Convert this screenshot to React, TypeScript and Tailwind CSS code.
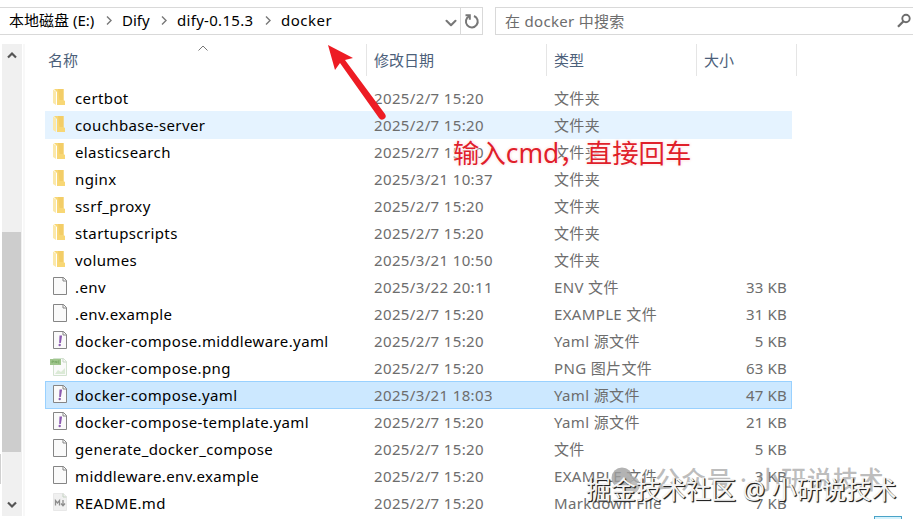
import { ChevronDown } from 'lucide-react';

type Kind = 'folder' | 'file' | 'yaml' | 'png' | 'md';

interface Entry {
  name: string;
  date: string;
  type: string;
  size?: string;
  kind: Kind;
  state?: 'hover' | 'selected';
}

const entries: Entry[] = [
  { name: 'certbot', date: '2025/2/7 15:20', type: '文件夹', kind: 'folder' },
  { name: 'couchbase-server', date: '2025/2/7 15:20', type: '文件夹', kind: 'folder', state: 'hover' },
  { name: 'elasticsearch', date: '2025/2/7 15:20', type: '文件夹', kind: 'folder' },
  { name: 'nginx', date: '2025/3/21 10:37', type: '文件夹', kind: 'folder' },
  { name: 'ssrf_proxy', date: '2025/2/7 15:20', type: '文件夹', kind: 'folder' },
  { name: 'startupscripts', date: '2025/2/7 15:20', type: '文件夹', kind: 'folder' },
  { name: 'volumes', date: '2025/3/21 10:50', type: '文件夹', kind: 'folder' },
  { name: '.env', date: '2025/3/22 20:11', type: 'ENV 文件', size: '33 KB', kind: 'file' },
  { name: '.env.example', date: '2025/2/7 15:20', type: 'EXAMPLE 文件', size: '31 KB', kind: 'file' },
  { name: 'docker-compose.middleware.yaml', date: '2025/2/7 15:20', type: 'Yaml 源文件', size: '5 KB', kind: 'yaml' },
  { name: 'docker-compose.png', date: '2025/2/7 15:20', type: 'PNG 图片文件', size: '63 KB', kind: 'png' },
  { name: 'docker-compose.yaml', date: '2025/3/21 18:03', type: 'Yaml 源文件', size: '47 KB', kind: 'yaml', state: 'selected' },
  { name: 'docker-compose-template.yaml', date: '2025/2/7 15:20', type: 'Yaml 源文件', size: '21 KB', kind: 'yaml' },
  { name: 'generate_docker_compose', date: '2025/2/7 15:20', type: '文件', size: '5 KB', kind: 'file' },
  { name: 'middleware.env.example', date: '2025/2/7 15:20', type: 'EXAMPLE 文件', size: '3 KB', kind: 'file' },
  { name: 'README.md', date: '2025/2/7 15:20', type: 'Markdown File', size: '7 KB', kind: 'md' },
];

const FileIcon = ({ kind }: { kind: Kind }) => {
  if (kind === 'folder') {
    return (
      <svg width="20" height="20" viewBox="0 0 20 20" className="shrink-0">
        <path d="M4 1h9.500v11l1.500 1v4H7V4z" fill="#f8d775" />
        <path d="M8 1h5.500v11h-4z" fill="#f3cd67" />
        <path d="M3 1.500l3 2v13.500l-3-2z" fill="#fbe8a9" />
      </svg>
    );
  }
  const pale = kind === 'png' || kind === 'md';
  return (
    <svg width="20" height="20" viewBox="0 0 20 20" className="shrink-0">
      <path
        d="M3.500 0.500h10l3 3v14h-13z"
        fill={kind === 'md' ? '#f0f0f0' : '#fafafa'}
        stroke={kind === 'png' ? '#d3e3d0' : kind === 'md' ? '#e8e8e8' : '#858585'}
      />
      <path d="M13 0.500v3.500h3.500" fill="none" stroke={pale ? '#c5d3c2' : '#858585'} />
      {kind === 'yaml' && (
        <g fill="#8b5ab0">
          <path d="M9.500 4.500h2.600l-1.200 7.500H9.200z" />
          <circle cx="9.700" cy="14" r="1.200" />
        </g>
      )}
      {kind === 'png' && (
        <g>
          <path d="M0 1h11v6H0z" fill="#9fc58c" />
          <path d="M2 5V3h1.500v1H2M5 5V3l1.500 2V3M9.500 3H8v2h1.500" fill="none" stroke="#76a662" strokeWidth="0.7" />
          <path d="M5 16l3-4 3 2 4-4v6z" fill="#dbead6" />
        </g>
      )}
      {kind === 'md' && (
        <path d="M5.500 12.500v-5l2 2.500 2-2.500v5M13 7v5.500m-2-2l2 2.200 2-2.200" fill="none" stroke="#8c8c8c" strokeWidth="1.300" />
      )}
    </svg>
  );
};

const Crumb = () => (
  <svg width="6" height="9" viewBox="0 0 6 9" className="shrink-0">
    <path d="M1 0.500l4 4-4 4" fill="none" stroke="#777" strokeWidth="1.400" />
  </svg>
);

const AddressBar = () => (
  <div className="flex h-7 mt-[7px] text-black">
    <div className="flex w-[483px] border border-l-0 border-[#d9d9d9]">
      <div className="flex flex-1 items-center pb-0.5 pl-[9px] whitespace-nowrap">
        <span className="w-[97px]">本地磁盘 (E:)</span>
        <Crumb />
        <span className="ml-[10px] w-[39px]">Dify</span>
        <Crumb />
        <span className="ml-[10px] w-[88px] tracking-[0.3px]">dify-0.15.3</span>
        <Crumb />
        <span className="ml-[10px] tracking-[0.5px]">docker</span>
      </div>
      <ChevronDown size={18} strokeWidth={2.8} className="mt-[6px] text-[#777]" />
      <div className="flex w-[22px] items-center justify-center border-l border-[#d9d9d9]">
        <svg width="16" height="16" viewBox="0 0 16 16" fill="none" stroke="#777" strokeWidth="2">
          <path d="M10 3a5.900 5.900 0 1 1-4.800 0.200" />
          <path d="M1.500 2.200h4.300v4.500" />
        </svg>
      </div>
    </div>
    <div className="ml-3 flex flex-1 items-center border border-r-0 border-[#d9d9d9] pl-[9px] text-[#6d6d6d]">
      <span className="flex-1 tracking-[0.3px]">在 docker 中搜索</span>
      <svg width="16" height="16" viewBox="0 0 16 16" fill="none" stroke="#6d6d6d" className="mr-px">
        <circle cx="10" cy="5.500" r="3.700" strokeWidth="1.900" />
        <path d="M7.500 8.200L2 13.800" strokeWidth="2.200" />
      </svg>
    </div>
  </div>
);

const ScrollBar = () => (
  <div className="flex h-[472px]">
    <div className="mt-[410px] h-[30px] w-px bg-[#d0d0d0]" />
    <div className="ml-px flex w-5 flex-col items-center bg-[#f0f0f0]">
      <svg width="10" height="8" viewBox="0 0 10 8" className="mt-[7px] mr-px">
        <path d="M1 6.500l4-4 4 4" fill="none" stroke="#555" strokeWidth="2.200" />
      </svg>
      <div className="mt-[173px] mr-px h-[220px] w-[19px] bg-[#cdcdcd]" />
      <svg width="10" height="8" viewBox="0 0 10 8" className="mt-[49px] mr-px">
        <path d="M1 1.500l4 4 4-4" fill="none" stroke="#555" strokeWidth="2.200" />
      </svg>
    </div>
    <div className="ml-px w-0.5 bg-[#f8f8f8]" />
  </div>
);

const Header = () => (
  <div className="flex h-8 items-stretch leading-8 text-[#4c607a]">
    <div className="relative w-[322px] border-r border-[#e5e5e5] pl-[3px]">
      名称
      <svg width="10" height="6" viewBox="0 0 10 6" className="absolute top-px left-[153px]">
        <path d="M0.500 5.500L5 1l4.500 4.500" fill="none" stroke="#777" />
      </svg>
    </div>
    <div className="w-[180px] border-r border-[#e5e5e5] pl-[7px]">修改日期</div>
    <div className="w-[150px] border-r border-[#e5e5e5] pl-[7px]">类型</div>
    <div className="w-[100px] border-r border-[#e5e5e5] pl-[7px]">大小</div>
  </div>
);

const rowState = {
  hover: 'bg-[#e5f3ff] border-[#e5f3ff]',
  selected: 'bg-[#cce8ff] border-[#99d1ff]',
  none: 'border-transparent',
};

const Row = ({ entry }: { entry: Entry }) => (
  <div className={`-mb-px flex h-7 w-[747px] items-center border whitespace-nowrap text-[#6d6d6d] ${rowState[entry.state ?? 'none']}`}>
    <div className="ml-1 flex w-[324px] items-center">
      <FileIcon kind={entry.kind} />
      <span className="ml-[5px] tracking-[0.38px] text-black">{entry.name}</span>
    </div>
    <span className="w-[180px] tracking-[0.36px]">{entry.date}</span>
    <span className="w-[150px] tracking-[0.35px]">{entry.type}</span>
    <span className="flex-1 pr-1 text-right tracking-[0.2px]">{entry.size}</span>
  </div>
);

const Annotation = () => (
  <>
    <svg width="62" height="80" viewBox="0 0 62 80" className="absolute top-[42px] left-[326px]">
      <path d="M2 3l25 13-8 2 40 54a3.500 3.500 0 0 1-6 4L14 21l-5 7z" fill="#ed1c24" />
    </svg>
    <div className="absolute top-[136px] left-[453px] text-[26.4px] leading-[34px] whitespace-nowrap text-[#e0202a] [text-shadow:0_0_1px_#fff,0_0_2px_#fff,0_0_2px_#fff,0_0_3px_#fbb]">
      输入cmd，直接回车
    </div>
  </>
);

const Watermark = () => (
  <>
    <svg width="34" height="28" viewBox="0 0 34 28" className="absolute top-[467px] left-[609px]">
      <circle cx="13" cy="11" r="10.500" fill="#a0a0a0" fillOpacity="0.8" />
      <circle cx="22" cy="18" r="9" fill="#b0b0b0" fillOpacity="0.8" />
    </svg>
    <div className="absolute top-[462px] left-[655px] text-[25px] leading-[34px] font-medium tracking-[0.9px] whitespace-nowrap text-[#909090]/60">
      公众号 · 小研说技术
    </div>
    <div className="absolute top-[472px] left-[586px] text-[25px] leading-[34px] whitespace-nowrap text-[#f4f4f4] [text-shadow:1px_1px_1px_#222,1px_1px_0_#333]">
      掘金技术社区 @ 小研说技术
    </div>
  </>
);

const App = () => {
  return (
    <div className="relative flex h-[519px] w-[913px] flex-col overflow-hidden bg-white font-['Noto_Sans','Noto_Sans_CJK_SC',sans-serif] text-[15px]">
      <AddressBar />
      <div className="mt-[9px] flex">
        <ScrollBar />
        <div className="ml-5 flex flex-col">
          <Header />
          <div className="mt-2 flex flex-col">
            {entries.map((entry) => (
              <Row key={entry.name} entry={entry} />
            ))}
          </div>
        </div>
      </div>
      <Annotation />
      <Watermark />
      <div className="absolute top-[516px] left-[874px] h-3 w-7 border border-[#4aa3c8] bg-[#d5f2fc]" />
    </div>
  );
};

export default App;
